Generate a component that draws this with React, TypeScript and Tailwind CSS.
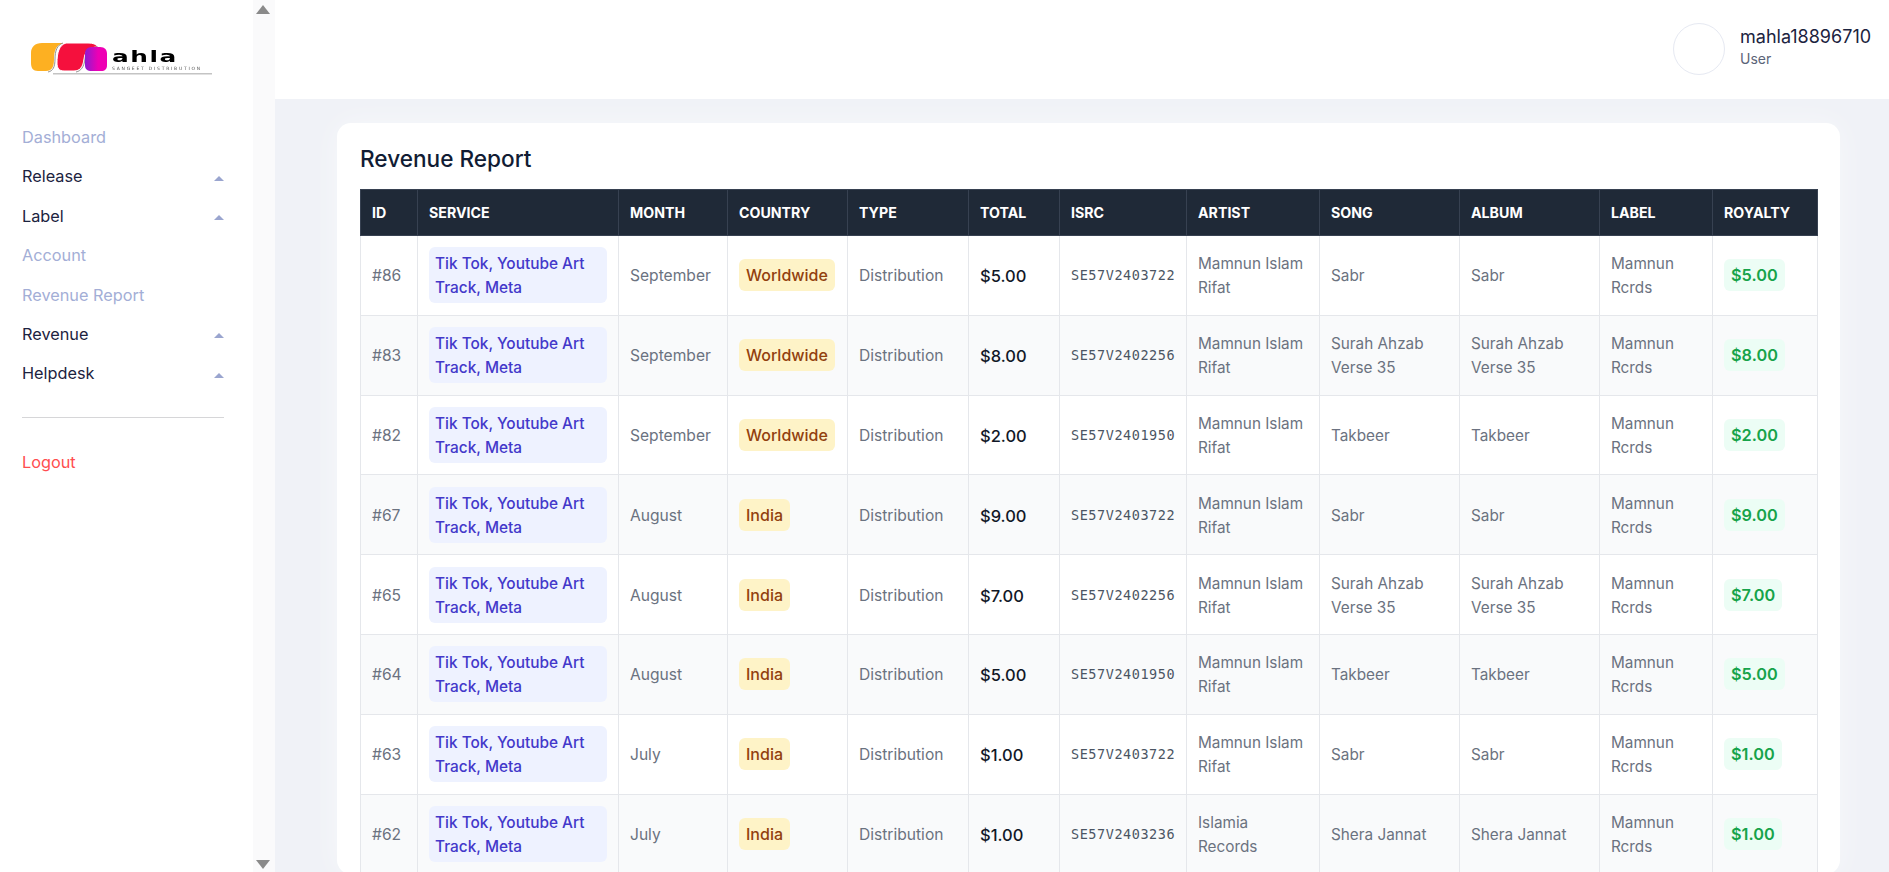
import React from "react";

type Row = {
  id: string;
  month: string;
  country: string;
  total: string;
  isrc: string;
  artist: string;
  song: string;
};

const rows: Row[] = [
  { id: "#86", month: "September", country: "Worldwide", total: "$5.00", isrc: "SE57V2403722", artist: "Mamnun Islam Rifat", song: "Sabr" },
  { id: "#83", month: "September", country: "Worldwide", total: "$8.00", isrc: "SE57V2402256", artist: "Mamnun Islam Rifat", song: "Surah Ahzab Verse 35" },
  { id: "#82", month: "September", country: "Worldwide", total: "$2.00", isrc: "SE57V2401950", artist: "Mamnun Islam Rifat", song: "Takbeer" },
  { id: "#67", month: "August", country: "India", total: "$9.00", isrc: "SE57V2403722", artist: "Mamnun Islam Rifat", song: "Sabr" },
  { id: "#65", month: "August", country: "India", total: "$7.00", isrc: "SE57V2402256", artist: "Mamnun Islam Rifat", song: "Surah Ahzab Verse 35" },
  { id: "#64", month: "August", country: "India", total: "$5.00", isrc: "SE57V2401950", artist: "Mamnun Islam Rifat", song: "Takbeer" },
  { id: "#63", month: "July", country: "India", total: "$1.00", isrc: "SE57V2403722", artist: "Mamnun Islam Rifat", song: "Sabr" },
  { id: "#62", month: "July", country: "India", total: "$1.00", isrc: "SE57V2403236", artist: "Islamia Records", song: "Shera Jannat" },
];

const columns = [
  { name: "ID", width: "w-[57px]" },
  { name: "Service", width: "w-[201px]" },
  { name: "Month", width: "w-[109px]" },
  { name: "Country", width: "w-[120px]" },
  { name: "Type", width: "w-[121px]" },
  { name: "Total", width: "w-[91px]" },
  { name: "ISRC", width: "w-[127px]" },
  { name: "Artist", width: "w-[133px]" },
  { name: "Song", width: "w-[140px]" },
  { name: "Album", width: "w-[140px]" },
  { name: "Label", width: "w-[113px]" },
  { name: "Royalty", width: "w-[105px]" },
];

const navItems = [
  { label: "Dashboard", dropdown: false },
  { label: "Release", dropdown: true },
  { label: "Label", dropdown: true },
  { label: "Account", dropdown: false },
  { label: "Revenue Report", dropdown: false },
  { label: "Revenue", dropdown: true },
  { label: "Helpdesk", dropdown: true },
];

function Logo() {
  return (
    <div className="relative h-[44px] w-[184px] blur-[0.35px]">
      <svg width="184" height="44" viewBox="0 0 184 44" className="absolute left-0 top-0">
        <defs>
          <linearGradient id="magenta" x1="0" y1="0" x2="1" y2="0">
            <stop offset="0" stopColor="#8f1ad0" />
            <stop offset="0.6" stopColor="#ee00b4" />
          </linearGradient>
        </defs>
        <path d="M12 2 H33 C26 4 24 10 24 18 C24 26 22 30 16 30 H8 C3 30 1 27 1 22 V12 C1 6 5 2 12 2Z" fill="#fdb022" />
        <path d="M33 2 C27 4 25 10 25 18 C25 26 23 30 18 31" fill="none" stroke="#777" strokeWidth="0.8" />
        <path d="M36 2 H58 C63 2 66 3 68 6 C59 6 55 10 54 18 C53 26 50 30 44 30 H34 C29 30 27 27 27 22 C27 12 29 4 36 2Z" fill="#f5103d" stroke="#fff" strokeWidth="1" />
        <path d="M68 6 C59 6 56 10 55 18 C54 26 51 30 46 31" fill="none" stroke="#777" strokeWidth="0.8" />
        <path d="M62 6 H70 C75 6 77 9 77 13 V24 C77 28 75 30 71 30 H62 C57 30 55 28 55 24 V13 C55 9 57 6 62 6Z" fill="url(#magenta)" />
        <rect x="23" y="32" width="159" height="1.5" fill="#c4c4c4" />
      </svg>
      <span className="absolute left-[82px] top-[7px] origin-left scale-x-[1.55] text-[16px] leading-[18px] font-bold tracking-[1px] text-black [font-family:'DejaVu_Sans',sans-serif]">
        ahla
      </span>
      <span className="absolute left-[82px] top-[25px] text-[4.5px] leading-[5px] tracking-[1.75px] text-[#555] [font-family:'DejaVu_Sans',sans-serif]">
        SANGEET DISTRIBUTION
      </span>
    </div>
  );
}

function Sidebar() {
  return (
    <aside className="relative flex h-full w-[275px] shrink-0 bg-[#fafafb]">
      <div className="h-full w-[253px] bg-white px-[22px]">
        <div className="pt-[41px] pl-[8px]">
          <Logo />
        </div>
        <nav className="mt-[32px] flex flex-col">
          {navItems.map((item) => (
            <div key={item.label} className="flex h-[39.4px] items-center justify-between pr-[1px] pt-[1px] text-[16.3px]">
              <span className={item.dropdown ? "text-[#1c2340]" : "text-[#a3aed6]"}>{item.label}</span>
              {item.dropdown && (
                <span className="mr-[-1px] mt-[3px] -translate-x-[7px] h-0 w-0 border-x-[5px] border-b-[5px] border-x-transparent border-b-[#9aa5cf]" />
              )}
            </div>
          ))}
        </nav>
        <div className="mt-[24px] w-[202px] border-t border-[#d6d6d8]" />
        <div className="mt-[32px] text-[16.3px] text-[#ff4d4f]">Logout</div>
      </div>
      <span className="absolute left-[256px] top-[5px] h-0 w-0 border-x-[7px] border-b-[9px] border-x-transparent border-b-[#8a8a8a]" />
      <span className="absolute left-[256px] top-[860px] h-0 w-0 border-x-[7px] border-t-[9px] border-x-transparent border-t-[#8a8a8a]" />
    </aside>
  );
}

function Header() {
  return (
    <header className="flex h-[99px] shrink-0 items-center justify-end bg-white pb-[2px] pr-[16px]">
      <div className="h-[52px] w-[52px] rounded-full border border-[#e6e9f2]" />
      <div className="-mt-[3px] ml-[15px] flex w-[133px] flex-col">
        <span className="text-[18px] leading-[24px] text-[#1c2340]">mahla18896710</span>
        <span className="text-[14px] leading-[20px] text-[#5b6478]">User</span>
      </div>
    </header>
  );
}

function RevenueTable() {
  return (
    <table className="w-[1457px] table-fixed border-collapse text-[15.6px] leading-[24px] text-[#6b7280]">
      <thead>
        <tr className="h-[46px] bg-[#1f2937]">
          {columns.map((col) => (
            <th
              key={col.name}
              className={`${col.width} border border-[#374151] px-[11px] text-left text-[14.2px] font-bold uppercase text-white`}
            >
              {col.name}
            </th>
          ))}
        </tr>
      </thead>
      <tbody>
        {rows.map((row, i) => (
          <tr key={row.id} className={i % 2 === 1 ? "h-[79.8px] bg-[#f9fafb]" : "h-[79.8px] bg-white"}>
            <td className="border border-[#e5e7eb] px-[11px] pt-[2px]">{row.id}</td>
            <td className="border border-[#e5e7eb] px-[11px]">
              <span className="block rounded-[6px] bg-[#eef2ff] px-[6px] pb-[3px] pt-[5px] text-[15.4px] font-medium text-[#4338ca]">
                Tik Tok, Youtube Art Track, Meta
              </span>
            </td>
            <td className="border border-[#e5e7eb] px-[11px] pt-[2px]">{row.month}</td>
            <td className="border border-[#e5e7eb] px-[11px]">
              <span className="inline-block rounded-[6px] bg-[#fef3c7] px-[7px] py-[4px] text-[16px] font-medium text-[#92400e]">
                {row.country}
              </span>
            </td>
            <td className="border border-[#e5e7eb] px-[11px] pt-[2px]">Distribution</td>
            <td className="border border-[#e5e7eb] px-[11px] pt-[2px] text-[16.5px] font-medium text-[#111827]">{row.total}</td>
            <td className="border border-[#e5e7eb] px-[11px] text-[13.5px] tracking-[0.55px] text-[#4b5563] [font-family:'DejaVu_Sans_Mono',monospace]">
              {row.isrc}
            </td>
            <td className="border border-[#e5e7eb] px-[11px] pt-[2px] text-[15.3px]">{row.artist}</td>
            <td className="border border-[#e5e7eb] px-[11px] pt-[2px] text-[15.3px]">{row.song}</td>
            <td className="border border-[#e5e7eb] px-[11px] pt-[2px] text-[15.3px]">{row.song}</td>
            <td className="border border-[#e5e7eb] px-[11px] pt-[2px] text-[15.3px]">Mamnun Rcrds</td>
            <td className="border border-[#e5e7eb] px-[11px]">
              <span className="inline-block rounded-[6px] bg-[#ecfdf5] px-[7px] py-[4px] text-[16.3px] font-semibold text-[#16a34a]">
                {row.total}
              </span>
            </td>
          </tr>
        ))}
      </tbody>
    </table>
  );
}

export default function App() {
  return (
    <div className="flex h-[872px] w-full overflow-hidden bg-[#f0f2f7] text-[16px] [font-family:Inter,sans-serif]">
      <Sidebar />
      <div className="flex min-w-0 flex-1 flex-col">
        <Header />
        <main className="pl-[62px] pt-[24px]">
          <div className="w-[1503px] rounded-[14px] bg-white px-[23px] pt-[21px] shadow-[0_0_30px_rgba(255,255,255,0.5)]">
            <h1 className="mb-[15px] text-[22.6px] leading-[30px] font-medium text-[#111c34]">Revenue Report</h1>
            <RevenueTable />
          </div>
        </main>
      </div>
    </div>
  );
}
